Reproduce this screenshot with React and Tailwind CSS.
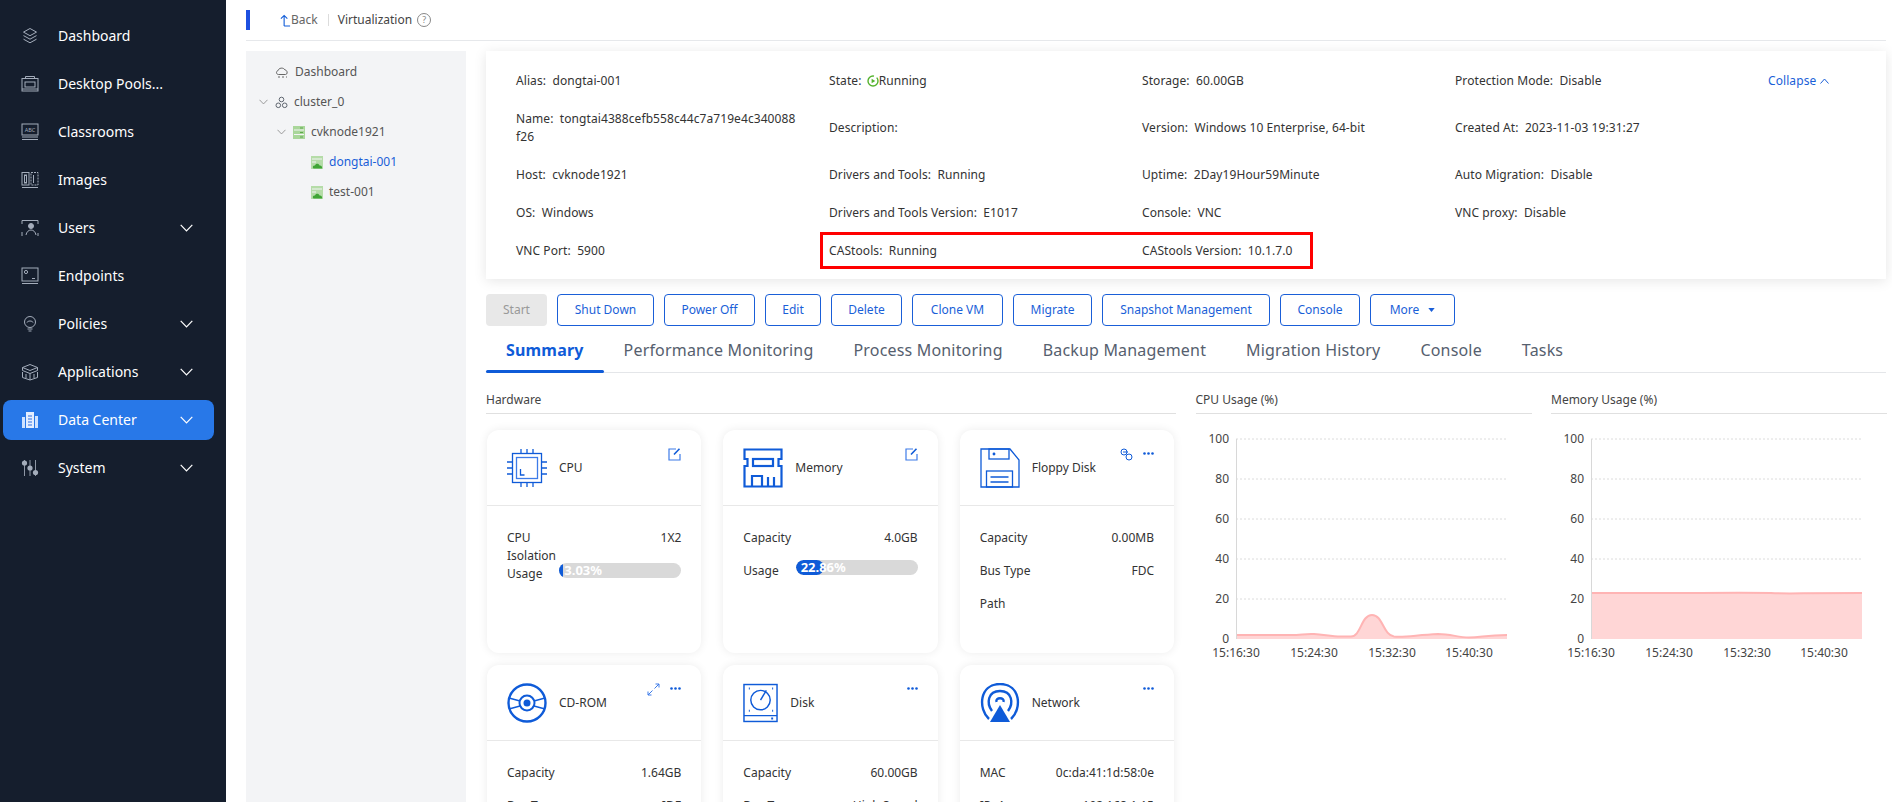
import { useState } from "react";

const BLUE = "#0f5bd8";

function Glyph({ children, className = "w-[18px] h-[18px]", stroke = "#a4adbb", box = "0 0 18 18" }) {
  return (
    <svg viewBox={box} fill="none" stroke={stroke} strokeWidth="1" className={className}>
      {children}
    </svg>
  );
}

const sideIcons = {
  dashboard: <Glyph><path d="M9 1.500l6.500 3.600L9 8.700 2.500 5.100z" /><path d="M2.500 8.600L9 12.200l6.500-3.600" /><path d="M2.500 12.200L9 15.800l6.500-3.600" /></Glyph>,
  desktop: <Glyph><path d="M4.500 3.500V1.500h9v2" /><rect x="1" y="3.500" width="16" height="12.500" /><rect x="4" y="7" width="10" height="5" /><path d="M1 14h16" /></Glyph>,
  classroom: (
    <Glyph>
      <rect x="1" y="1" width="16" height="11" />
      <text x="9" y="8.500" textAnchor="middle" fontSize="5.500" fill="#a4adbb" stroke="none">ABC</text>
      <path d="M1 14h16M1 16.500h16" />
    </Glyph>
  ),
  images: <Glyph><rect x="1" y="1.500" width="7" height="12.500" /><rect x="3.500" y="4" width="2" height="8" /><rect x="10" y="1.500" width="7" height="12.500" strokeDasharray="2 1" /><path d="M12.500 4v8M1 16.500h16" /></Glyph>,
  users: <Glyph><path d="M1 5V1.500h16V5M1 17v-4M17 17v-3" /><circle cx="10" cy="7" r="2.500" fill="#a4adbb" /><path d="M5 16c.5-3 2.500-5 5-5s4.500 2 5 5" /></Glyph>,
  endpoints: <Glyph><rect x="1" y="1" width="16" height="13" /><circle cx="5" cy="5" r="1.600" /><path d="M11 11.500h3M1 16.500h16" /></Glyph>,
  policies: <Glyph><circle cx="9" cy="7" r="5.500" /><path d="M6 7.500c.5-2 5.500-2 6 0M6.500 14h5M7.500 16h3" /></Glyph>,
  applications: <Glyph><path d="M9 1.500l7.500 3v3L9 10.500l-7.500-3v-3z" /><path d="M1.500 4.500L9 7.500l7.500-3M1.500 9v5.500L9 17l7.500-2.500V9M9 10.500V17M5 11v4M13 11v4" /></Glyph>,
  datacenter: (
    <svg viewBox="0 0 18 18" className="w-[18px] h-[18px]">
      <rect x="1" y="6" width="3" height="11" fill="#cfe2ff" />
      <rect x="5" y="1" width="8" height="16" fill="#e4eeff" />
      <rect x="14" y="5" width="3" height="12" fill="#cfe2ff" />
      <path d="M7 5h4M7 8h4M7 11h4M7 14h4" stroke="#2f6fe0" strokeWidth="1" />
    </svg>
  ),
  system: (
    <svg viewBox="0 0 18 18" className="w-[18px] h-[18px]">
      <path d="M3.500 1v16M9 1v16M14.500 1v16" stroke="#8e97a5" strokeWidth="1" />
      <circle cx="3.500" cy="4" r="2.600" fill="#a4adbb" />
      <circle cx="9" cy="9" r="2.600" fill="#a4adbb" />
      <circle cx="14.500" cy="13.500" r="2.600" fill="#a4adbb" />
    </svg>
  ),
};

const menu = [
  { name: "Dashboard", icon: "dashboard" },
  { name: "Desktop Pools...", icon: "desktop" },
  { name: "Classrooms", icon: "classroom" },
  { name: "Images", icon: "images" },
  { name: "Users", icon: "users", more: true },
  { name: "Endpoints", icon: "endpoints" },
  { name: "Policies", icon: "policies", more: true },
  { name: "Applications", icon: "applications", more: true },
  { name: "Data Center", icon: "datacenter", more: true, active: true },
  { name: "System", icon: "system", more: true },
];

function Chevron({ color = "#ffffff", className = "w-[13px] h-[8px]" }) {
  return (
    <svg viewBox="0 0 13 8" fill="none" stroke={color} strokeWidth="1.200" className={className}>
      <path d="M.7.8l5.800 6 5.800-6" />
    </svg>
  );
}

function Sidebar() {
  return (
    <aside className="w-[226px] shrink-0 bg-[#151e2d] pt-[12px] text-white">
      {menu.map((x) => (
        <div key={x.name} className="h-[48px] pl-[3px] pr-[12px] flex items-center">
          <div className={`w-full h-[40px] flex items-center pl-[18px] pr-[21px] rounded-lg ${x.active ? "bg-[#2878e8]" : ""}`}>
            <div className="w-[37px] shrink-0">{sideIcons[x.icon]}</div>
            <span className="flex-1 text-sm whitespace-nowrap">{x.name}</span>
            {x.more && <Chevron />}
          </div>
        </div>
      ))}
    </aside>
  );
}

function TopBar() {
  return (
    <header className="h-[41px] shrink-0 flex items-center border-b border-[#e6e8eb] text-xs">
      <div className="w-[4px] h-[20px] bg-[#1d50e0]" />
      <svg viewBox="0 0 12 14" fill="none" stroke={BLUE} strokeWidth="1.200" className="ml-[30px] w-[11px] h-[13px]">
        <path d="M4.500 13V1.500M1 5l3.500-3.500L8 5M4.500 13H11" />
      </svg>
      <span className="text-[#666]">Back</span>
      <div className="ml-[10px] mr-[9px] w-px h-[12px] bg-[#dcdcdc]" />
      <span className="text-[#444]">Virtualization</span>
      <span className="ml-[5px] w-[14px] h-[14px] rounded-full border border-[#888] text-[#888] text-[9px] leading-[12px] text-center">?</span>
    </header>
  );
}

const CloudIcon = () => (
  <Glyph className="w-[14px] h-[14px]" stroke="#666" box="0 0 14 14">
    <path d="M3.500 9.500C1 9.500.8 6 3 5.700 3.500 2.800 8.500 2 10 5c2.500 0 3 4.500.5 4.500z" />
    <path d="M3 12h2M7 12h2M11 12h1" />
  </Glyph>
);

const ClusterIcon = () => (
  <Glyph className="w-[13px] h-[13px]" stroke="#5f6670" box="0 0 13 13">
    <circle cx="6.500" cy="3.500" r="2.300" /><circle cx="3.300" cy="9.300" r="2.300" /><circle cx="9.700" cy="9.300" r="2.300" />
  </Glyph>
);

const HostIcon = () => (
  <svg viewBox="0 0 12 13" className="w-[12px] h-[13px]">
    <rect width="12" height="13" fill="#a9d69a" />
    <path d="M1 4h10M1 8.500h10" stroke="#f3f4f6" strokeWidth="1" />
    <rect x="7" y="1.500" width="3" height="1" fill="#5da84a" /><rect x="7" y="6" width="3" height="1" fill="#5da84a" /><rect x="7" y="10.500" width="3" height="1" fill="#5da84a" />
  </svg>
);

const VmIcon = () => (
  <svg viewBox="0 0 12 13" className="w-[12px] h-[13px]">
    <rect width="12" height="13" fill="#b5dca8" />
    <path d="M1 3h10M1 6h4" stroke="#f3f4f6" strokeWidth="1" />
    <path d="M2.500 12.500c-1.500-1.500 0-3.500 1.500-3 .5-2.500 4-2.500 4.500 0 2-.3 3 1.500 2.500 3z" fill="#3fa535" />
  </svg>
);

const tree = [
  { label: "Dashboard", icon: <CloudIcon />, pad: "pl-[29px]" },
  { label: "cluster_0", icon: <ClusterIcon />, pad: "pl-[13px]", open: true },
  { label: "cvknode1921", icon: <HostIcon />, pad: "pl-[31px]", open: true },
  { label: "dongtai-001", icon: <VmIcon />, pad: "pl-[65px]", selected: true },
  { label: "test-001", icon: <VmIcon />, pad: "pl-[65px]" },
];

function Tree() {
  return (
    <nav className="w-[220px] shrink-0 bg-[#f3f4f6] pt-[6px] text-xs">
      {tree.map((x) => (
        <div key={x.label} className={`h-[30px] flex items-center ${x.pad}`}>
          {x.open && <Chevron color="#888" className="w-[9px] h-[6px] mr-[7px]" />}
          {x.icon}
          <span className={`ml-[6px] ${x.selected ? "text-[#1a5fd8]" : "text-[#555]"}`}>{x.label}</span>
        </div>
      ))}
    </nav>
  );
}

function RunningIcon() {
  return (
    <svg viewBox="0 0 12 12" className="inline-block ml-[2px] w-[12px] h-[12px] align-[-2px]">
      <circle cx="6" cy="6" r="5" fill="none" stroke="#55b32e" strokeWidth="1.400" strokeDasharray="24 3" />
      <path d="M4.600 3.700L8.300 6 4.600 8.300z" fill="#55b32e" />
    </svg>
  );
}

function InfoCard() {
  const [open, setOpen] = useState(true);
  return (
    <section className="relative h-[228px] shrink-0 bg-white shadow-[0_2px_12px_rgba(0,0,0,0.1)] pl-[30px] pt-[21px] text-xs leading-[18px] tracking-[0.08px] text-[#333]">
      <div className="grid grid-cols-[313px_313px_313px_313px_auto] gap-y-[20px] items-center">
        <div>Alias: &nbsp;dongtai-001</div>
        <div>State: <RunningIcon />Running</div>
        <div>Storage: &nbsp;60.00GB</div>
        <div>Protection Mode: &nbsp;Disable</div>
        <button onClick={() => setOpen(!open)} className="flex items-center gap-[4px] text-xs text-[#1a5fd8]">
          Collapse
          <svg viewBox="0 0 9 6" fill="none" stroke="#1a5fd8" className="w-[9px] h-[6px]"><path d="M.5 5.500L4.500 1l4 4.500" /></svg>
        </button>

        <div>Name: &nbsp;tongtai4388cefb558c44c7a719e4c340088<br />f26</div>
        <div>Description:</div>
        <div>Version: &nbsp;Windows 10 Enterprise, 64-bit</div>
        <div className="col-span-2">Created At: &nbsp;2023-11-03 19:31:27</div>

        <div>Host: &nbsp;cvknode1921</div>
        <div>Drivers and Tools: &nbsp;Running</div>
        <div>Uptime: &nbsp;2Day19Hour59Minute</div>
        <div className="col-span-2">Auto Migration: &nbsp;Disable</div>

        <div>OS: &nbsp;Windows</div>
        <div>Drivers and Tools Version: &nbsp;E1017</div>
        <div>Console: &nbsp;VNC</div>
        <div className="col-span-2">VNC proxy: &nbsp;Disable</div>

        <div>VNC Port: &nbsp;5900</div>
        <div>CAStools: &nbsp;Running</div>
        <div>CAStools Version: &nbsp;10.1.7.0</div>
      </div>
      <div className="absolute left-[334px] top-[181px] w-[493px] h-[37px] border-[3px] border-[#ff0000]" />
    </section>
  );
}

const actions = [
  { label: "Shut Down", w: "w-[97px]" },
  { label: "Power Off", w: "w-[91px]" },
  { label: "Edit", w: "w-[56px]" },
  { label: "Delete", w: "w-[71px]" },
  { label: "Clone VM", w: "w-[91px]" },
  { label: "Migrate", w: "w-[79px]" },
  { label: "Snapshot Management", w: "w-[168px]" },
  { label: "Console", w: "w-[80px]" },
];

function Actions() {
  return (
    <div className="mt-[15px] flex gap-[10px] text-xs shrink-0">
      <button className="w-[61px] h-[32px] rounded bg-[#e8e8e8] text-[#999]">Start</button>
      {actions.map((x) => (
        <button key={x.label} className={`${x.w} h-[32px] rounded border border-[#1a5fd8] text-[#1a5fd8]`}>{x.label}</button>
      ))}
      <button className="w-[85px] h-[32px] rounded border border-[#1a5fd8] text-[#1a5fd8] flex items-center justify-center gap-[9px]">
        More
        <svg viewBox="0 0 8 5" className="w-[7px] h-[4px]"><path d="M0 0h8L4 5z" fill="#1a5fd8" /></svg>
      </button>
    </div>
  );
}

const tabs = ["Summary", "Performance Monitoring", "Process Monitoring", "Backup Management", "Migration History", "Console", "Tasks"];

function Tabs() {
  return (
    <div className="h-[47px] shrink-0 flex border-b border-[#e4e6e9] text-base tracking-[0.18px]">
      {tabs.map((x, i) => (
        <div key={x} className={`relative px-5 pt-[12px] whitespace-nowrap ${i === 0 ? "font-bold text-[#0f5bd8]" : "text-[#56606e]"}`}>
          {x}
          {i === 0 && <div className="absolute left-0 right-0 bottom-[-1px] h-[3px] rounded-full bg-[#0f5bd8]" />}
        </div>
      ))}
    </div>
  );
}

const line = { fill: "none", stroke: BLUE, strokeWidth: 1.3 };

const cardIcons = {
  cpu: (
    <svg viewBox="0 0 40 40" className="w-10 h-10" {...line}>
      <rect x="5.500" y="5.500" width="29" height="29" />
      <rect x="9.500" y="9.500" width="21" height="21" stroke="#3d7be8" />
      <path d="M13.500 21v6h4" />
      <path d="M14 1v4M20 1v4M26 1v4M14 35v4M20 35v4M26 35v4M0 14h5M0 20h5M0 26h5M35 14h5M35 20h5M35 26h5" />
    </svg>
  ),
  memory: (
    <svg viewBox="0 0 40 40" className="w-10 h-10" fill="none" stroke={BLUE} strokeWidth="2.200">
      <path d="M1.500 1.500H38.500V11H35.500V18H38.500V38.500H1.500V18H4.500V11H1.500Z" />
      <rect x="10" y="11" width="20" height="7" />
      <path d="M9 38.500V28H19V38.500M25 29V38.500M31 29V38.500" />
    </svg>
  ),
  floppy: (
    <svg viewBox="0 0 40 40" className="w-10 h-10" {...line}>
      <path d="M1 1h29l9 11v27H1z" />
      <rect x="9" y="1" width="20" height="10" />
      <circle cx="14" cy="6" r=".8" fill={BLUE} />
      <rect x="6.500" y="23" width="26" height="16" />
      <path d="M10.500 29h18M10.500 34h18" />
    </svg>
  ),
  cd: (
    <svg viewBox="0 0 40 40" className="w-10 h-10" fill="none" stroke={BLUE}>
      <ellipse cx="20" cy="20" rx="18.500" ry="18.500" strokeWidth="2.400" />
      <circle cx="20" cy="20" r="7.500" strokeWidth="2" />
      <circle cx="20" cy="20" r="3.500" fill={BLUE} stroke="none" />
      <path d="M2 15l11 3M2 26l11-3M38 15l-11 3M38 26l-11-3" strokeWidth="1.300" />
    </svg>
  ),
  disk: (
    <svg viewBox="0 0 36 40" className="w-[35px] h-10" {...line} strokeWidth="1.500">
      <rect x="1" y="1" width="34" height="38" />
      <path d="M1 33h34" />
      <circle cx="18" cy="17" r="10" />
      <path d="M18 17l6-10" />
      <path d="M6 5h1M30 5h1M6 28h1M30 28h1M29 36h2" strokeWidth="2" />
    </svg>
  ),
  network: (
    <svg viewBox="0 0 40 40" className="w-10 h-10" fill="none" stroke={BLUE} strokeWidth="2.400">
      <path d="M9 36C-2 26-1 1 20 1s22 25 11 35" />
      <path d="M12 28C6 20 8 8 20 8s14 12 8 20" />
      <path d="M16.500 19c-1.500-5 8.500-5 7 0" />
      <path d="M20 22l10 17H10z" fill={BLUE} stroke="none" />
    </svg>
  ),
};

const Dots = () => (
  <svg viewBox="0 0 11 3" className="w-[11px] h-[3px] mt-[4px]">
    <circle cx="1.500" cy="1.500" r="1.300" fill={BLUE} /><circle cx="5.500" cy="1.500" r="1.300" fill={BLUE} /><circle cx="9.500" cy="1.500" r="1.300" fill={BLUE} />
  </svg>
);

const EditIcon = () => (
  <svg viewBox="0 0 13 13" fill="none" className="w-[13px] h-[13px]">
    <path d="M8 1H1v11h11V6" stroke="#3d7be8" strokeWidth="1.200" />
    <path d="M11.500.8L6 6.500" stroke={BLUE} strokeWidth="1.600" />
  </svg>
);

const LinkIcon = () => (
  <svg viewBox="0 0 13 13" fill="none" stroke={BLUE} className="w-[13px] h-[13px]">
    <circle cx="4" cy="4" r="3" /><circle cx="9" cy="9" r="3" /><path d="M3 4h5" />
  </svg>
);

const ExpandIcon = () => (
  <svg viewBox="0 0 13 13" fill="none" stroke="#3d7be8" className="w-[13px] h-[13px]">
    <path d="M7.500 5.500L12 1M8.500 1H12v3.500M5.500 7.500L1 12M4.500 12H1V8.500" />
  </svg>
);

function Row({ label, value }) {
  return (
    <div className="flex justify-between whitespace-nowrap">
      <span>{label}</span>
      <span>{value}</span>
    </div>
  );
}

function Usage({ value }) {
  return (
    <div className="flex justify-between">
      <span>Usage</span>
      <div className="relative w-[122px] h-[15px] -mt-[2px] rounded-full bg-[#d9d9d9] overflow-hidden">
        <div className="h-full rounded-full bg-[#0f5bd8]" style={{ width: `${value}%` }} />
        <span className="absolute left-[5px] top-0 text-[13px] leading-[15px] font-bold text-white">{value.toFixed(2)}%</span>
      </div>
    </div>
  );
}

function HwCard({ icon, title, tools, children, gap = "gap-y-[15px]" }) {
  return (
    <div className="h-[223px] rounded-xl bg-white shadow-[0_0_10px_rgba(0,0,0,0.08)] text-xs leading-[18px] text-[#333] overflow-hidden">
      <div className="h-[76px] px-5 pt-[18px] flex justify-between border-b border-[#e8e8e8]">
        <div className="h-10 flex items-center gap-[12px]">
          {icon}
          <span>{title}</span>
        </div>
        <div className="flex gap-[10px] items-start">{tools}</div>
      </div>
      <div className={`px-5 pt-[23px] flex flex-col ${gap}`}>{children}</div>
    </div>
  );
}

function Hardware() {
  return (
    <div className="w-[690px] shrink-0">
      <SectionTitle>Hardware</SectionTitle>
      <div className="ml-px mt-[16px] w-[687px] grid grid-cols-3 gap-x-[22px] gap-y-[12px]">
        <HwCard icon={cardIcons.cpu} title="CPU" tools={<EditIcon />} gap="">
          <Row label="CPU" value="1X2" />
          <Row label="Isolation" />
          <Usage value={3.03} />
        </HwCard>
        <HwCard icon={cardIcons.memory} title="Memory" tools={<EditIcon />}>
          <Row label="Capacity" value="4.0GB" />
          <Usage value={22.86} />
        </HwCard>
        <HwCard icon={cardIcons.floppy} title="Floppy Disk" tools={<><LinkIcon /><Dots /></>}>
          <Row label="Capacity" value="0.00MB" />
          <Row label="Bus Type" value="FDC" />
          <Row label="Path" />
        </HwCard>
        <HwCard icon={cardIcons.cd} title="CD-ROM" tools={<><ExpandIcon /><Dots /></>}>
          <Row label="Capacity" value="1.64GB" />
          <Row label="Bus Type" value="IDE" />
        </HwCard>
        <HwCard icon={cardIcons.disk} title="Disk" tools={<Dots />}>
          <Row label="Capacity" value="60.00GB" />
          <Row label="Bus Type" value="High Speed" />
        </HwCard>
        <HwCard icon={cardIcons.network} title="Network" tools={<Dots />}>
          <Row label="MAC" value="0c:da:41:1d:58:0e" />
          <Row label="IPv4" value="192.168.1.15" />
        </HwCard>
      </div>
    </div>
  );
}

function SectionTitle({ children }) {
  return (
    <div className="h-[41px] pt-[18px] border-b border-[#e0e0e0] text-xs leading-[18px] text-[#444]">{children}</div>
  );
}

const yTicks = [100, 80, 60, 40, 20, 0];
const xTicks = [["15:16:30", 40], ["15:24:30", 118], ["15:32:30", 196], ["15:40:30", 273]];

function Chart({ title, linePath }) {
  return (
    <div className="flex-1">
      <SectionTitle>{title}</SectionTitle>
      <svg viewBox="0 0 336 240" className="mt-[17px] w-[336px] h-[240px]">
        {yTicks.map((t, i) => (
          <g key={t}>
            {t > 0 && <line x1="40" x2="311" y1={8 + i * 40} y2={8 + i * 40} stroke="#dcdcdc" strokeDasharray="2 2" />}
            <text x="33" y={12 + i * 40} textAnchor="end" fontSize="12" fill="#444">{t}</text>
          </g>
        ))}
        <path d={`${linePath} V208 H40 Z`} fill="#ffd6d6" />
        <path d={linePath} fill="none" stroke="#ffb4b4" strokeWidth="2" />
        <line x1="40.500" x2="40.500" y1="8" y2="208" stroke="#d8d8d8" />
        {xTicks.map(([t, x]) => (
          <text key={t} x={x} y="226" textAnchor="middle" fontSize="12" fill="#444">{t}</text>
        ))}
      </svg>
    </div>
  );
}

const cpuLine = "M40 204 H95 C105 204 110 202.500 118 203 C128 203.500 135 205.500 145 205.500 H155 C165 205.500 165 184 176 184 C187 184 187 204 198 205.500 C210 206.500 220 204 242 203 C255 203 262 206.500 273 206.500 C285 206.500 290 204 311 204";
const memLine = "M40 162 H150 C180 161.500 200 161.500 220 162 C235 163 245 162 311 162";

export default function App() {
  return (
    <div className="w-[1892px] h-[802px] overflow-hidden flex bg-white font-['Noto_Sans',sans-serif]">
      <Sidebar />
      <main className="flex-1 min-w-0 pl-[20px] pr-[6px] flex flex-col">
        <TopBar />
        <div className="mt-[10px] flex flex-1 min-h-0 gap-[20px]">
          <Tree />
          <div className="flex-1 min-w-0 flex flex-col">
            <InfoCard />
            <Actions />
            <Tabs />
            <div className="flex gap-[19.5px]">
              <Hardware />
              <Chart title="CPU Usage (%)" linePath={cpuLine} />
              <Chart title="Memory Usage (%)" linePath={memLine} />
            </div>
          </div>
        </div>
      </main>
    </div>
  );
}
